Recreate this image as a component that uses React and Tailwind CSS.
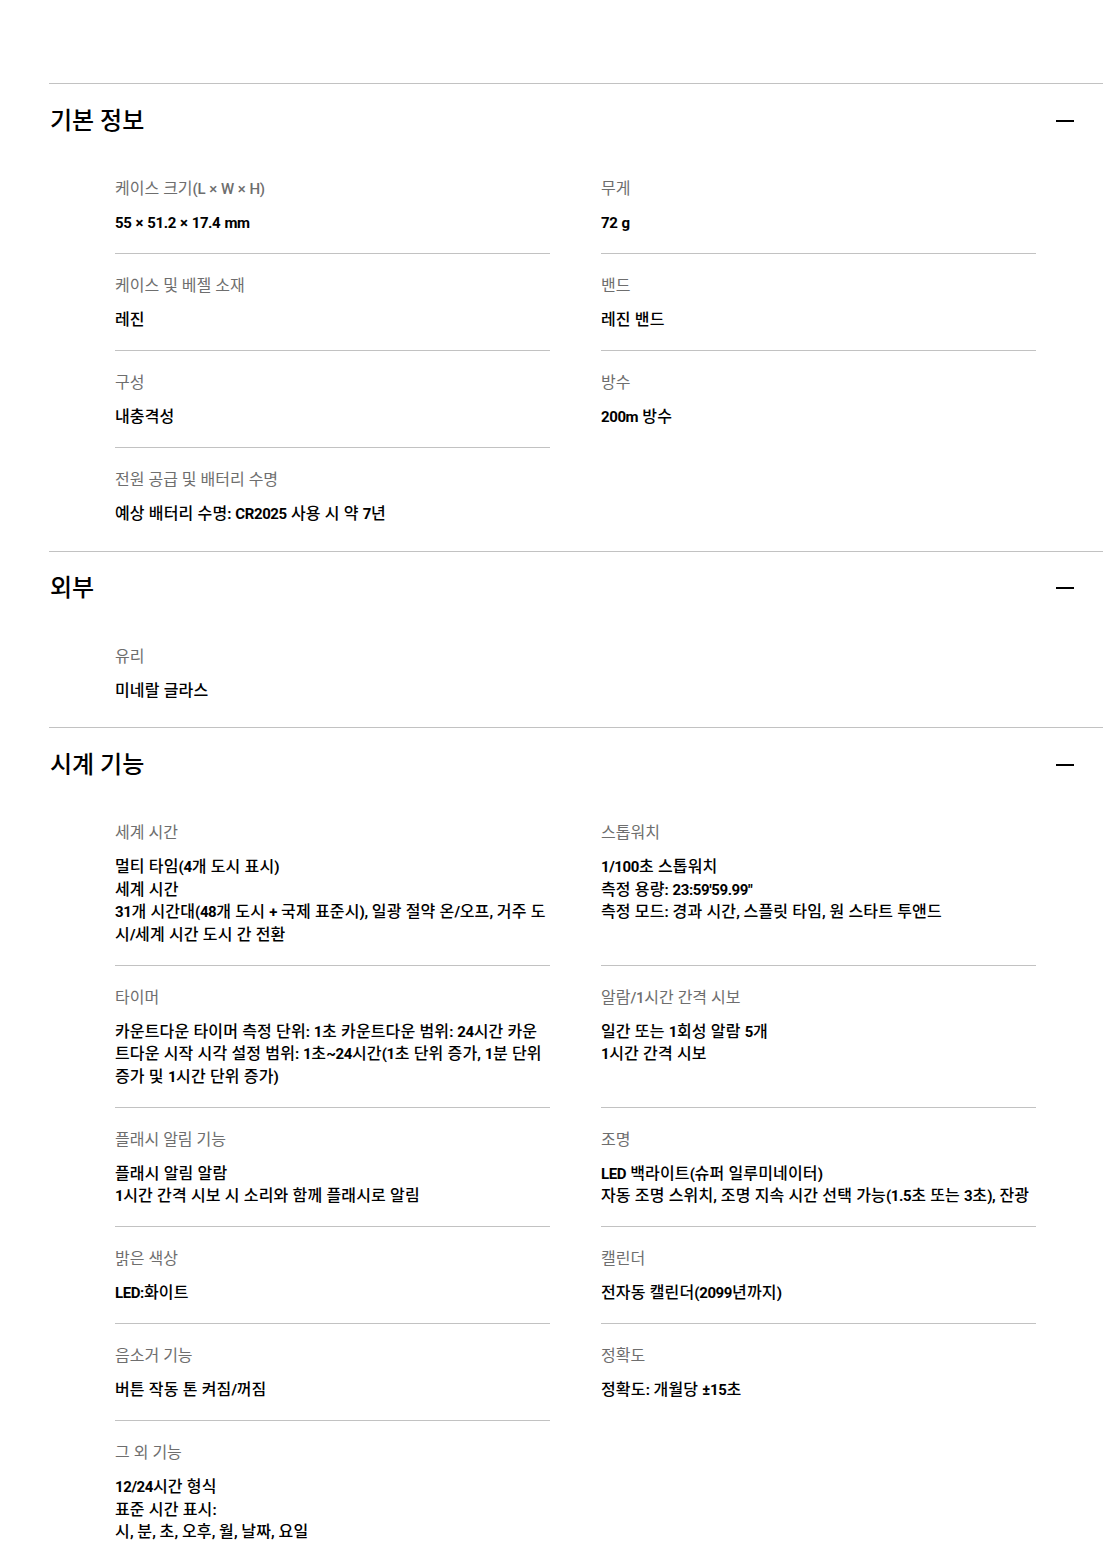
import React from "react";

const sections = [
  {
    title: "기본 정보",
    items: [
      { label: "케이스 크기(L × W × H)", value: ["55 × 51.2 × 17.4 mm"] },
      { label: "무게", value: ["72 g"] },
      { label: "케이스 및 베젤 소재", value: ["레진"] },
      { label: "밴드", value: ["레진 밴드"] },
      { label: "구성", value: ["내충격성"] },
      { label: "방수", value: ["200m 방수"] },
      { label: "전원 공급 및 배터리 수명", value: ["예상 배터리 수명: CR2025 사용 시 약 7년"] },
    ],
  },
  {
    title: "외부",
    items: [{ label: "유리", value: ["미네랄 글라스"] }],
  },
  {
    title: "시계 기능",
    items: [
      {
        label: "세계 시간",
        value: [
          "멀티 타임(4개 도시 표시)",
          "세계 시간",
          "31개 시간대(48개 도시 + 국제 표준시), 일광 절약 온/오프, 거주 도시/세계 시간 도시 간 전환",
        ],
      },
      {
        label: "스톱워치",
        value: ["1/100초 스톱워치", "측정 용량: 23:59'59.99\"", "측정 모드: 경과 시간, 스플릿 타임, 원 스타트 투앤드"],
      },
      {
        label: "타이머",
        value: [
          "카운트다운 타이머 측정 단위: 1초 카운트다운 범위: 24시간 카운트다운 시작 시각 설정 범위: 1초~24시간(1초 단위 증가, 1분 단위 증가 및 1시간 단위 증가)",
        ],
      },
      { label: "알람/1시간 간격 시보", value: ["일간 또는 1회성 알람 5개", "1시간 간격 시보"] },
      { label: "플래시 알림 기능", value: ["플래시 알림 알람", "1시간 간격 시보 시 소리와 함께 플래시로 알림"] },
      {
        label: "조명",
        value: ["LED 백라이트(슈퍼 일루미네이터)", "자동 조명 스위치, 조명 지속 시간 선택 가능(1.5초 또는 3초), 잔광"],
      },
      { label: "밝은 색상", value: ["LED:화이트"] },
      { label: "캘린더", value: ["전자동 캘린더(2099년까지)"] },
      { label: "음소거 기능", value: ["버튼 작동 톤 켜짐/꺼짐"] },
      { label: "정확도", value: ["정확도: 개월당 ±15초"] },
      { label: "그 외 기능", value: ["12/24시간 형식", "표준 시간 표시:", "시, 분, 초, 오후, 월, 날짜, 요일"] },
    ],
  },
];

function Rich({ text, latinClass }) {
  const parts = text.split(/([!-~±×]+)/);
  return parts.map((p, i) =>
    i % 2 === 1 ? (
      <span key={i} className={latinClass}>
        {p}
      </span>
    ) : (
      <React.Fragment key={i}>{p}</React.Fragment>
    )
  );
}

function Item({ item, border }) {
  return (
    <div className={border ? "pt-[21px] pb-[18.5px] border-b border-[#c2c2c2]" : "pt-[21px] pb-[18.5px]"}>
      <div className="text-[16px] leading-[22px] text-[#6e6e6e] font-normal">
        <Rich text={item.label} latinClass="text-[15px] font-medium tracking-[-0.3px]" />
      </div>
      <div className="mt-[12px] text-[16px] leading-[22.5px] tracking-[0.15px] text-black font-medium">
        {item.value.map((line, i) => (
          <div key={i}>
            <Rich text={line} latinClass="text-[15px] font-bold tracking-[-0.4px]" />
          </div>
        ))}
      </div>
    </div>
  );
}

function Section({ section }) {
  const n = section.items.length;
  return (
    <section className="border-t border-[#c2c2c2]">
      <div className="h-[71px] pt-[2px] flex items-center justify-between pl-[1px] pr-[29px]">
        <h2 className="text-[24px] font-medium text-black leading-[30px]">{section.title}</h2>
        <div className="w-[18px] h-[2px] bg-black" />
      </div>
      <div className="grid grid-cols-[435px_435px] gap-x-[51px] pl-[66px] pt-[2px] pb-[6.5px]">
        {section.items.map((item, i) => (
          <Item key={i} item={item} border={i + 2 < n} />
        ))}
      </div>
    </section>
  );
}

export default function App() {
  return (
    <div
      className="bg-white min-h-[1561px] pt-[83px] pl-[49px] pr-[12px]"
      style={{ fontFamily: 'Roboto, "Noto Sans CJK KR", "Noto Sans", sans-serif' }}
    >
      {sections.map((s, i) => (
        <Section key={i} section={s} />
      ))}
    </div>
  );
}
